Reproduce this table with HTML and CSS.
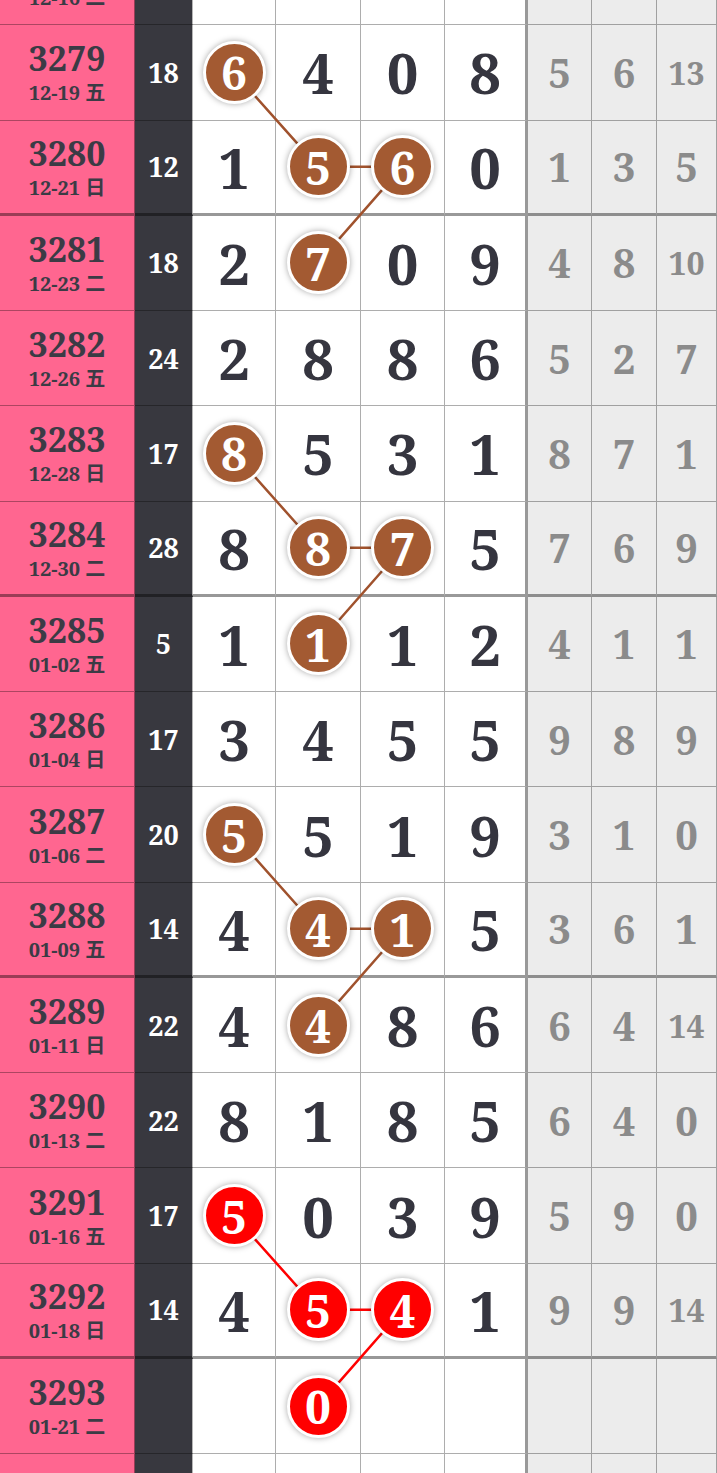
FILE: index.html
```html
<!DOCTYPE html>
<html lang="zh">
<head>
    <meta charset="UTF-8">
    <meta name="viewport" content="width=device-width, initial-scale=1.0">
    <title>走势图</title>
    <link rel="stylesheet" href="styles.css">
</head>
<body>

    <!-- Trend chart -->
    <div class="board" id="board">
        <svg class="links" id="links"></svg>
        <!-- rows are inserted here -->
    </div>

    <script>
        // issue, date, sum, digits, hit columns, missing values, group
        const rows = [
            ['3278', '12-16 二', '20', [5, 7, 2, 6], [], [2, 9, 8], 0],
            ['3279', '12-19 五', '18', [6, 4, 0, 8], [0], [5, 6, 13], 1],
            ['3280', '12-21 日', '12', [1, 5, 6, 0], [1, 2], [1, 3, 5], 1],
            ['3281', '12-23 二', '18', [2, 7, 0, 9], [1], [4, 8, 10], 1],
            ['3282', '12-26 五', '24', [2, 8, 8, 6], [], [5, 2, 7], 0],
            ['3283', '12-28 日', '17', [8, 5, 3, 1], [0], [8, 7, 1], 2],
            ['3284', '12-30 二', '28', [8, 8, 7, 5], [1, 2], [7, 6, 9], 2],
            ['3285', '01-02 五', '5', [1, 1, 1, 2], [1], [4, 1, 1], 2],
            ['3286', '01-04 日', '17', [3, 4, 5, 5], [], [9, 8, 9], 0],
            ['3287', '01-06 二', '20', [5, 5, 1, 9], [0], [3, 1, 0], 3],
            ['3288', '01-09 五', '14', [4, 4, 1, 5], [1, 2], [3, 6, 1], 3],
            ['3289', '01-11 日', '22', [4, 4, 8, 6], [1], [6, 4, 14], 3],
            ['3290', '01-13 二', '22', [8, 1, 8, 5], [], [6, 4, 0], 0],
            ['3291', '01-16 五', '17', [5, 0, 3, 9], [0], [5, 9, 0], 4],
            ['3292', '01-18 日', '14', [4, 5, 4, 1], [1, 2], [9, 9, 14], 4],
            ['3293', '01-21 二', '', ['', 0, '', ''], [1], ['', '', ''], 4],
            ['', '', '', ['', '', '', ''], [], ['', '', ''], 0]
        ];

        const hotGroup = 4; // latest group is drawn in red
        const board = document.getElementById('board');

        rows.forEach((r, i) => {
            const [issue, date, sum, digits, hits, miss, group] = r;
            const row = document.createElement('div');
            row.classList.add('row');
            if (i % 4 === 2) row.classList.add('thick');

            let html = `
                <div class="cell issue"><span class="no">${issue}</span><span class="date">${date}</span></div>
                <div class="cell sum">${sum}</div>`;
            digits.forEach((d, c) => {
                if (hits.includes(c)) {
                    const color = group === hotGroup ? 'red' : 'brown';
                    html += `<div class="cell num"><span class="ball ${color}" data-group="${group}">${d}</span></div>`;
                } else {
                    html += `<div class="cell num">${d}</div>`;
                }
            });
            miss.forEach(m => {
                html += `<div class="cell miss${m >= 10 ? ' small' : ''}">${m}</div>`;
            });
            row.innerHTML = html;
            board.appendChild(row);
        });

        // Join the balls of each group with lines
        function drawLinks() {
            const svg = document.getElementById('links');
            const box = board.getBoundingClientRect();
            svg.setAttribute('width', box.width);
            svg.setAttribute('height', box.height);
            const groups = {};
            document.querySelectorAll('.ball').forEach(ball => {
                const g = ball.dataset.group;
                const b = ball.getBoundingClientRect();
                (groups[g] = groups[g] || []).push([b.left + b.width / 2 - box.left, b.top + b.height / 2 - box.top]);
            });
            let out = '';
            Object.keys(groups).forEach(g => {
                const pts = groups[g].map(p => p.join(',')).join(' ');
                const color = Number(g) === hotGroup ? '#f00' : '#a0522d';
                out += `<polyline points="${pts}" fill="none" stroke="${color}" stroke-width="2.5"/>`;
            });
            svg.innerHTML = out;
        }
        drawLinks();
    </script>

</body>
</html>
```

FILE: styles.css
```css
body {
    margin: 0;
    background-color: #fff;
    font-family: "Noto Serif", "DejaVu Serif", "Noto Sans CJK SC", serif;
    height: 1473px;
    overflow: hidden;
}
.board {
    position: relative;
    margin-top: -70px;
    width: 717px;
}
.links {
    position: absolute;
    left: 0;
    top: 0;
    z-index: 1;
    pointer-events: none;
}
.row {
    display: grid;
    grid-template-columns: 135px 58px 83px 85px 84px 83px 64px 65px 60px;
    height: 95.27px;
}
.cell {
    box-sizing: border-box;
    display: flex;
    align-items: center;
    justify-content: center;
    border-bottom: 1px solid rgba(0, 0, 0, 0.32);
    border-right: 1px solid rgba(0, 0, 0, 0.32);
    font-weight: bold;
}
.row.thick .cell {
    border-bottom: 3px solid rgba(0, 0, 0, 0.4);
}
/* Issue column */
.issue {
    flex-direction: column;
    gap: 6px;
    background-color: #ff6690;
    color: #3b3b45;
    border-right: 1px solid rgba(0, 0, 0, 0.4);
}
.issue .no {
    font-size: 34px;
    line-height: 36px;
}
.issue .date {
    font-size: 20px;
    line-height: 22px;
}
/* Sum column */
.sum {
    background-color: #38383f;
    color: #fff;
    font-size: 27px;
    border-right: 1px solid #b5b5b5;
}
/* Digit columns */
.num {
    background-color: #fff;
    color: #35353f;
    font-size: 56px;
}
.num:nth-child(6) {
    border-right: 3px solid #999;
}
.ball {
    position: relative;
    z-index: 2;
    display: flex;
    align-items: center;
    justify-content: center;
    width: 57px;
    height: 57px;
    border: 3px solid #fff;
    border-radius: 50%;
    color: #fff;
    font-size: 46px;
    box-shadow: 0 0 6px rgba(0, 0, 0, 0.35);
}
.ball.brown {
    background-color: #a35a32;
}
.ball.red {
    background-color: #f00;
}
/* Missing columns */
.miss {
    background-color: #ececec;
    color: #8b8b8b;
    font-size: 40px;
}
.miss.small {
    font-size: 32px;
}
```
